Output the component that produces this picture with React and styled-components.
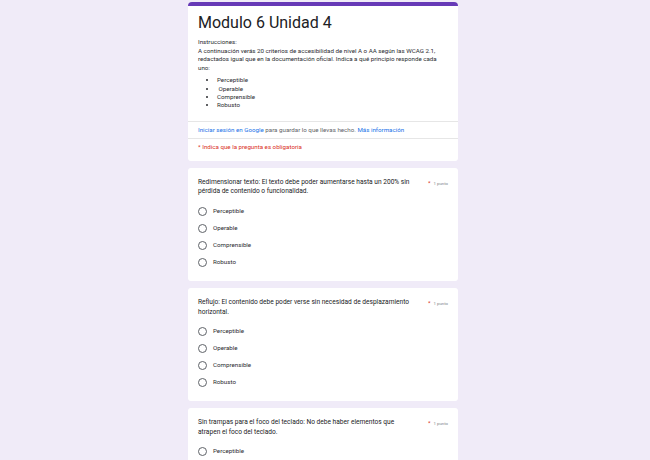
import React from "react";
import styled, { createGlobalStyle } from "styled-components";

const Global = createGlobalStyle`
  html, body { margin: 0; padding: 0; background: #f0ebf8; }
  body { font-family: Roboto, "Noto Sans", Arial, sans-serif; color: #202124; }
`;

const Page = styled.div`
  display: flex;
  justify-content: center;
  align-items: flex-start;
  padding: 2px 4px 0 0;
  height: 460px;
  overflow: hidden;
  box-sizing: border-box;
`;

const Column = styled.div`
  width: 270px;
  flex: none;
  display: flex;
  flex-direction: column;
  gap: 7px;
`;

const Card = styled.div`
  flex: none;
  background: #fff;
  border-radius: 3px;
  overflow: hidden;
  ${(p) => p.$head && `border-top: 4px solid #673ab7; border-top-left-radius: 4px; border-top-right-radius: 4px;`}
`;

const Section = styled.div`
  padding: ${(p) => p.$pad || "6px 10px"};
  & + & { border-top: 1px solid #e6e6e6; }
`;

const Title = styled.h1`
  margin: 0;
  font-size: 16px;
  font-weight: 400;
  line-height: 20px;
  color: #202124;
`;

const Small = styled.div`
  font-size: 6.2px;
  line-height: 8.6px;
  color: ${(p) => p.$color || "#2b2c30"};
`;

const List = styled.ul`
  margin: 4px 0 0;
  padding-left: 19px;
  font-size: 6.2px;
  line-height: 8.3px;
  color: #2b2c30;
`;

const Link = styled.span`
  color: #1a73e8;
`;

const QHead = styled.div`
  display: flex;
  justify-content: space-between;
  align-items: flex-start;
  gap: 12px;
`;

const QText = styled.div`
  font-size: 6.6px;
  line-height: 9.6px;
  color: #202124;
  flex: 1;
`;

const Points = styled.div`
  font-size: 4.3px;
  color: #80868b;
  white-space: nowrap;
  padding-top: 1px;
  span { color: #d93025; font-size: 6px; margin-right: 3px; }
`;

const Options = styled.div`
  display: flex;
  flex-direction: column;
  gap: 8px;
  margin-top: 10px;
`;

const Option = styled.label`
  display: flex;
  align-items: center;
  gap: 6px;
  font-size: 6.2px;
  line-height: 9px;
  color: #2b2c30;
`;

const Radio = styled.span`
  width: 7px;
  height: 7px;
  border: 1px solid #5f6368;
  border-radius: 50%;
  flex: none;
`;

const QCard = styled(Card)`
  padding: 10px 10px 14px 10px;
`;

const options = ["Perceptible", "Operable", "Comprensible", "Robusto"];

const questions = [
  "Redimensionar texto: El texto debe poder aumentarse hasta un 200% sin pérdida de contenido o funcionalidad.",
  "Reflujo: El contenido debe poder verse sin necesidad de desplazamiento horizontal.",
  "Sin trampas para el foco del teclado: No debe haber elementos que atrapen el foco del teclado.",
];

export default function App() {
  return (
    <>
      <Global />
      <Page>
        <Column>
          <Card $head>
            <Section $pad="7px 10px 11px">
              <Title>Modulo 6 Unidad 4</Title>
              <Small style={{ marginTop: 5 }}>Instrucciones:</Small>
              <Small>
                A continuación verás 20 criterios de accesibilidad de nivel A o AA según las WCAG 2.1,
                redactados igual que en la documentación oficial. Indica a qué principio responde cada
                uno:
              </Small>
              <List>
                <li>Perceptible</li>
                <li>&nbsp;Operable</li>
                <li>Comprensible</li>
                <li>Robusto</li>
              </List>
            </Section>
            <Section $pad="4px 10px 4px">
              <Small $color="#5f6368">
                <Link>Iniciar sesión en Google</Link> para guardar lo que llevas hecho.{" "}
                <Link>Más información</Link>
              </Small>
            </Section>
            <Section $pad="4px 10px 9px">
              <Small $color="#d93025">* Indica que la pregunta es obligatoria</Small>
            </Section>
          </Card>
          {questions.map((q) => (
            <QCard key={q}>
              <QHead>
                <QText>{q}</QText>
                <Points>
                  <span>*</span>1 punto
                </Points>
              </QHead>
              <Options>
                {options.map((o) => (
                  <Option key={o}>
                    <Radio />
                    {o}
                  </Option>
                ))}
              </Options>
            </QCard>
          ))}
        </Column>
      </Page>
    </>
  );
}
